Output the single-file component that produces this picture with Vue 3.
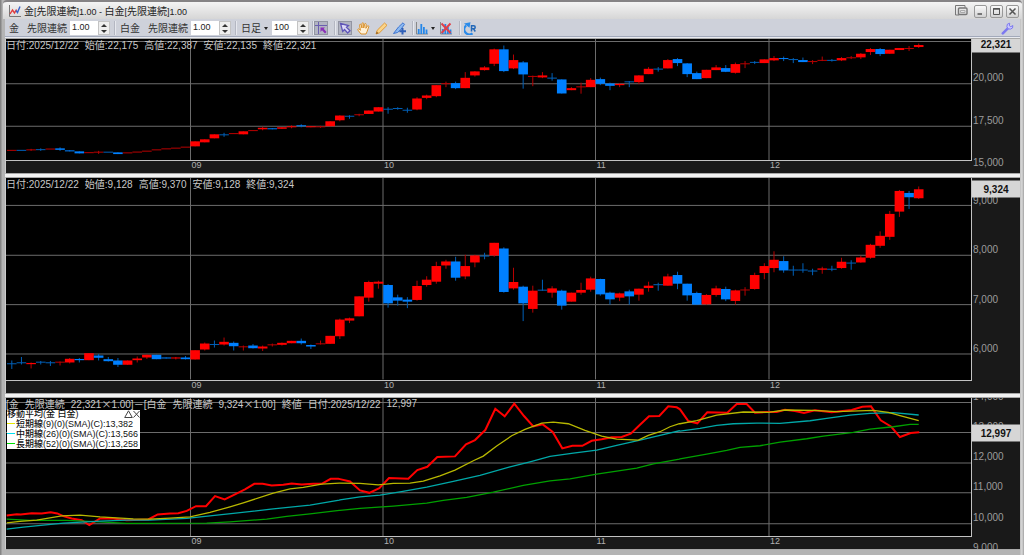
<script setup>
import { h, ref } from 'vue'

// Splits a label into Japanese and Latin runs so each gets its own face and size.
const Mix = (props) =>
  h(
    'span',
    { class: 'mix' },
    (props.t.match(/[\u3000-\u9fff\uff00-\uffef×]+|[^\u3000-\u9fff\uff00-\uffef×]+/g) || []).map((run) =>
      h('span', { class: /[\u3000-\u9fff\uff00-\uffef×]/.test(run) ? 'jp' : 'en' }, run)
    )
  )
Mix.props = ['t']

const qtyGold = ref('1.00')
const qtyPlatinum = ref('1.00')
const barCount = ref('100')
const period = ref('日足')

const STEP = 9.648
const center = (i) => 11.8 + STEP * i
const months = [
  { label: '09', x: 190.5 },
  { label: '10', x: 383 },
  { label: '11', x: 595.5 },
  { label: '12', x: 769 }
]

// colour, body top, body bottom, wick top, wick bottom
const parse = (src) =>
  src.trim().split(/\s*;\s*/).filter(Boolean).map((row, i) => {
    const [c, ...n] = row.trim().split(/\s+/)
    const [t, b = t, wt = t, wb = b] = n.map(Number)
    const thin = b - t < 1
    return {
      up: c === 'r',
      thin,
      x: center(i),
      top: thin ? (t + b) / 2 - 0.5 : t,
      height: thin ? 1 : b - t,
      w1: Math.min(wt, t),
      w2: Math.max(wb, b)
    }
  })

const gold = parse(`
r 150; b 150; r 149.5 149.5 148.5 150.5; b 149.3 149.3 148 150.5; r 148.7; b 148 149.5 147 150.5; b 150 151;
b 151 153; r 152.3; r 151.8 151.8 150.5 153.5; b 151.8; b 152 153.7; r 152.5; r 151.7; r 150.8; r 149.5;
r 148.5; r 147.8; r 146.8; r 141 146; r 139 142; r 134 138; b 134.5 134.5 132.5 136.5; r 133.3; r 131 134;
r 130.3; r 127.5 129 126.5 130; b 128 129; r 127 128.5; r 126 127 125 128; b 125 126 124 127; r 126 127;
r 126.5 126.5 125.5 127.5; r 121 126; r 115.3 120 115 121; b 116 116 115 118.5; r 114.5 114.5 113.5 116;
r 110.3 113.7; r 107 111.3; b 109 109 107 113.5; b 108.3 108.3 107 109.5; b 110 110 107.5 112.5;
r 98.3 109.3 97 110; r 95.3 97.7 94.5 99; r 85 96 85 97; r 83.5 83.5 81.5 87; b 83 88 81.5 89;
r 77.7 88 72 88; r 71.3 75.3 71 76.5; r 67.3 70 66 70.5; r 49.3 63.7 48.5 66; b 49.3 71 45.5 72;
r 60 68.3 54.5 69; b 62.3 74.3 61 88.5; r 76.3 76.3 75.5 86; r 75.3 77.3 72 78; b 78 78 73 80.5;
b 79.3 93.3; r 88 90 87 90; r 86.7 86.7 82.5 93.5; r 79.7 87 78 87; b 79 83.7 77.5 85; b 83.3 85.7 82.5 90;
r 83.7 85 83 87; b 81.7 81.7 81 87; r 75.3 82 75 84; r 68.7 74 67 74; b 69 69 67 71.5; r 60 68.3 59 68.3;
b 59 63 58 66; b 63.3 74 63 77; b 73 79 71.5 79; r 69.7 78; r 67.3 70 65 70; b 68 71.7 65 72;
r 64 72.7 62.5 73.5; r 63.7 63.7 61 68; b 62.3 62.3 61 64; r 59.3 63; r 58 60.3 56 61; b 58 59 56.5 61;
b 59.5 59.5 58 63; b 60 62 57.5 62; r 61.5 61.5 60 64; r 60.3 60.3 56.5 61; b 60.3 60.3 59 61.5;
r 58 60.3 57 61; r 57.7 57.7 56 59; r 53.7 57.3 53 59; r 49 52 48 55; b 49 54 48 56; r 49.7 53.7;
r 48 50; r 48.5 48.5 46 51; r 45 47 43.5 48`)

const platinum = parse(`
b 364.3 364.3 361 369.5; b 363.3 363.3 357.5 365; r 363.5 364.7 363 369; b 362.7 362.7 361.5 365;
b 363.3 363.3 361.5 366.5; r 362.7 362.7 362 366; r 359.3 363 358.5 364; b 359.5 360.7 358.5 363;
r 353.7 360.7; b 356 358.3 354.5 361; b 359.7 361.7 357.5 362; b 361 365.3 358.5 367.5; r 361 365.3;
r 359 360.7 357 363; r 355.3 358 355 359.5; b 355.3 359.7; b 358 359; r 358 359 357.5 360; b 358 359.7 356.5 360;
r 350.7 360; r 344 350 343 351; b 345 345 341 348; r 342.3 345 338 346; b 343.3 346.7 342 351;
r 347.3 347.3 346 351; b 346 348.7 344.5 349; r 347 349 346 351.5; r 345.3 345.3 344 347; r 343.3 345.3 343 346;
r 341.3 343.7; b 341.3 343.7 339 345; b 345.5 347 345 349.5; r 344.3 344.3 341 345; r 336.3 344.3;
r 320 336.7 319 339.5; r 318.7 321 318 323.5; r 296.7 316.7; r 282.3 298 281 302; r 282 284 281 289;
b 285.3 303.7 284.5 308; b 297.7 301 295 306; b 300 302 297.5 308.5; r 286.3 300.3 281 301;
r 280 285.3 276.5 287; r 266.3 282 262 284; r 261.7 265.7 260 269; b 261.7 278 257 281; r 266.3 276.7 255 279.5;
r 255.7 262.7 255 267.5; b 256.3 256.3 253 259.5; r 243 255.7 243 257; b 248.7 292.3 247.5 293;
r 282.3 288.7 268 290; b 287 303.7 286 321.5; r 291 309.3 286 313; b 290.5 290.5 280 291; r 288.7 293 286.5 298;
b 291 306 290 310; r 293 302; r 290.3 293 283 295; r 278.7 290 277 292; b 279.3 294.7 279 296; b 293 299.7 292 305;
r 293.7 298 293 301.5; b 291.7 296.7 290 305; r 289 295 289 301; r 286 288.3 282 292; b 285 285 283 291;
r 276.7 286 274 286; b 275.3 284 272 289.5; b 284 295.7 284 301; b 293.3 305 292 305; r 295.3 304.7 294.5 305;
r 288.7 295.3 286 297; b 289.3 299.7 287 301.5; r 290.7 301.3 290 305; r 290.3 290.3 287.5 296; r 275.3 289.3 273 290;
r 266.3 273.3 263.5 279.5; r 260 268.3 251.5 272.5; b 261.3 270.7 256.5 273; b 270.3 270.3 266 276;
b 270.3 270.3 263.5 273; b 271.3 271.3 269 275.5; r 268.7 270 267 274; b 269.5 269.5 266 271.5; r 262 268.3 258 269;
b 263.3 263.3 260.5 270; r 257.7 262.7 256 263; r 245 258 244 259; r 236 246 231.5 248; r 214 237 211 240;
r 191 211.7 190 217; b 193 197.3 191 209; r 189.3 198.3 186.5 199`)

// Curves are kept on a grid of thirds, in three consecutive blocks with their own origin.
const ORIGINS = [[0, 900], [1020, 1170], [2040, 1140]]
const trace = (...blocks) =>
  blocks
    .map((block, k) =>
      block.split(' ').map((pair) => {
        const [x, y] = pair.split(',').map(Number)
        return `${((x + ORIGINS[k][0]) / 3).toFixed(1)},${((y + ORIGINS[k][1]) / 3).toFixed(1)}`
      }).join(' ')
    )
    .join(' ')

const curves = [
  {
    name: 'spread',
    points: trace(
      '20,646 50,642 62,643 95,639 125,640 152,636 172,640 190,648 215,655 245,660 268,675 300,655 340,655 380,660 445,658 473,643 510,640 535,639 560,632 588,618 618,618 645,588 674,598 705,583 735,568 763,551 788,551 815,556 850,554 875,550 905,553 940,551 965,551 992,536 1015,536',
      '0,267 30,274 60,301 88,308 118,294 147,264 205,266 232,240 262,230 292,201 345,199 378,163 405,150 436,120 466,56 494,79 523,41 552,78 580,109 608,103 638,126 667,175 697,167 727,167 755,152 785,148 815,142 845,141 872,131 900,104 927,79 958,78 985,49 1010,52',
      '0,88 25,123 52,130 82,97 142,98 170,72 200,72 225,98 260,96 290,96 315,89 345,93 372,99 405,91 455,97 515,90 547,80 573,79 602,121 634,140 660,171 692,159 718,157'
    )
  },
  {
    name: 'long',
    points: trace(
      '20,657 90,661 200,661 300,665 380,670 620,669 690,665 800,657 860,649 930,641 1018,631',
      '0,361 60,355 160,348 260,339 310,331 380,322 460,306 550,286 630,272 690,266 770,252 890,234 940,221 1018,207',
      '0,236 80,222 140,211 180,202 240,197 300,186 380,176 430,168 520,157 570,147 640,140 690,133 716,133'
    )
  },
  {
    name: 'middle',
    points: trace(
      '20,687 70,681 130,675 190,669 300,663 380,660 450,660 560,655 700,640 820,626 930,615 1018,600',
      '0,329 60,320 120,315 180,305 260,291 340,274 420,256 510,230 570,215 630,199 700,189 770,180 830,166 900,150 960,136 1018,122',
      '0,153 60,145 110,136 160,131 230,129 300,130 390,122 440,115 510,105 570,100 640,98 716,105'
    )
  },
  {
    name: 'short',
    points: trace(
      '20,668 60,664 110,660 185,647 240,645 300,650 400,656 450,657 510,654 570,650 630,637 690,620 730,608 820,579 870,566 910,562 965,552 1018,549',
      '0,279 60,280 115,284 160,280 210,279 250,273 300,257 345,240 400,212 430,198 470,168 515,137 555,118 605,99 640,96 685,101 735,121 785,138 830,147 895,150 925,136 960,125 990,110 1018,101',
      '0,131 50,122 110,105 190,96 265,97 315,90 400,91 470,95 580,91 625,97 660,107 716,122'
    )
  }
]

const panels = [
  {
    id: 'gold', y: 39, h: 121, weight: 136, candles: gold, lines: [41.5, 83.5, 126],
    info: ['日付:2025/12/22', '始値:22,175', '高値:22,387', '安値:22,135', '終値:22,321'],
    prices: [['20,000', 78], ['17,500', 121], ['15,000', 163]], now: ['22,321', 44]
  },
  {
    id: 'platinum', y: 178, h: 202, weight: 217, candles: platinum, lines: [205.5, 255.5, 305, 354.5],
    info: ['日付:2025/12/22', '始値:9,128', '高値:9,370', '安値:9,128', '終値:9,324'],
    prices: [['9,000', 201], ['8,000', 250], ['7,000', 300], ['6,000', 349]], now: ['9,324', 189]
  },
  {
    id: 'diff', y: 398, h: 138, weight: 153, curves, lines: [402.5, 432.5, 463, 492.5, 523.5],
    info: ['[金', '先限連続', '22,321×1.00]－[白金', '先限連続', '9,324×1.00]', '終値', '日付:2025/12/22', '12,997'],
    prices: [['14,000', 397], ['13,000', 427], ['12,000', 457], ['11,000', 487], ['10,000', 518], ['9,000', 548]],
    now: ['12,997', 433]
  }
]

const legend = [
  { cls: 'short', text: '短期線(9)(0)(SMA)(C):13,382' },
  { cls: 'middle', text: '中期線(26)(0)(SMA)(C):13,566' },
  { cls: 'long', text: '長期線(52)(0)(SMA)(C):13,258' }
]
const share = (y, p) => `${((y - p.y) / (p.h + 13)) * 100}%`
</script>

<template>
  <main class="window">
    <header class="titlebar">
      <svg class="app-icon" width="13" height="13" viewBox="0 0 13 13">
        <path d="M1.5 0v11.5H13" fill="none" stroke="#777" />
        <path d="M2 9l2.5-4 2 3 2-3.500" fill="none" stroke="#e23a3a" stroke-width="1.400" />
        <path d="M8 5.500l1.500 2L12 1.500" fill="none" stroke="#3a62c8" stroke-width="1.400" />
      </svg>
      <h1><Mix t="金[先限連続]1.00 - 白金[先限連続]1.00" /></h1>
      <button class="plain" aria-label="別ウィンドウ">
        <svg width="13" height="12" viewBox="0 0 13 12" fill="none" stroke="#777">
          <path d="M10 2.500V.500H.500v9.500H4" />
          <rect x="3.500" y="3" width="8.500" height="6.500" rx="1" stroke-width="1.400" />
          <path d="M5.500 5.500h4.500v2H5.500z" stroke="#aaa" />
        </svg>
      </button>
      <button class="win" aria-label="最小化"><svg width="9" height="9" viewBox="0 0 9 9"><path d="M1.500 7h4.500" stroke="#555" stroke-width="1.500" /></svg></button>
      <button class="win" aria-label="最大化"><svg width="9" height="9" viewBox="0 0 9 9" fill="none" stroke="#555"><path d="M1.500 1.500h6v6h-6z" /><path d="M1 2h7" stroke-width="1.500" /></svg></button>
      <button class="win" aria-label="閉じる"><svg width="9" height="9" viewBox="0 0 9 9"><path d="M1.500 1.500l6 6M7.500 1.500l-6 6" stroke="#555" stroke-width="1.500" /></svg></button>
    </header>

    <nav class="toolbar">
      <div class="group wide">
        <span class="name">金</span>
        <label for="q1">先限連続</label>
        <span class="spin">
          <input id="q1" v-model="qtyGold" type="text" />
          <span class="steps"><button aria-label="増やす"></button><button aria-label="減らす"></button></span>
        </span>
      </div>
      <div class="group wide">
        <span class="name">白金</span>
        <label for="q2">先限連続</label>
        <span class="spin">
          <input id="q2" v-model="qtyPlatinum" type="text" />
          <span class="steps"><button aria-label="増やす"></button><button aria-label="減らす"></button></span>
        </span>
      </div>
      <div class="group period">
        <span class="select">
          <select v-model="period" aria-label="足種"><option>日足</option><option>週足</option><option>月足</option></select>
        </span>
        <span class="spin small">
          <input v-model="barCount" type="text" aria-label="本数" />
          <span class="steps"><button aria-label="増やす"></button><button aria-label="減らす"></button></span>
        </span>
      </div>
      <div class="group">
        <button class="tool on" aria-label="十字カーソル">
          <svg width="12" height="12" viewBox="0 0 12 12"><path d="M3.500 0v12M0 3.500h12" stroke="#6a5fb0" /><path d="M5.500 5.500h4.500L8.700 6.800 11.500 10 10 11.500 7 8.300 5.500 10z" fill="#8a2fb8" /></svg>
        </button>
      </div>
      <div class="group tools">
        <button class="tool on" aria-label="選択">
          <svg width="12" height="12" viewBox="0 0 12 12"><path d="M1.500 1.500l8 2-2 1.800L11 8.700 8.700 11 5.500 7.500 3.700 9.500z" fill="#dcd9f6" stroke="#5f55b8" stroke-width="1.300" /></svg>
        </button>
        <button class="tool" aria-label="移動">
          <svg width="13" height="13" viewBox="0 0 13 13"><path d="M4 12L1 8.200c-.8-1 .5-1.800 1.300-.9L3.400 8.300 2.600 3.300c-.2-1.300 1.200-1.500 1.500-.3L5 6V1.700C5 .4 6.600.4 6.700 1.700V6l.9-3.700c.3-1.200 1.700-.9 1.600.3L8.900 6.300l1.400-2.200c.7-1 1.900-.3 1.400.8L10.200 9.300 9 12z" fill="#fff1d8" stroke="#d9902a" /></svg>
        </button>
        <button class="tool" aria-label="鉛筆">
          <svg width="13" height="13" viewBox="0 0 13 13"><path d="M1 12l1.200-3.700L9.500 1l2.500 2.300-7.400 7.400z" fill="#fbd488" stroke="#e09a3a" /><path d="M1 12l.8-2.400 1.600 1.600z" fill="#8a5a20" /></svg>
        </button>
        <button class="tool" aria-label="ペン">
          <svg width="13" height="13" viewBox="0 0 13 13"><path d="M.500 11.500l5-6.500L10 .800l1.500 1.500L7.500 8l-3 2.500z" fill="#8bb9f2" stroke="#3f74d0" /><path d="M9.500 6v6.500M6.500 9.300h6.500" stroke="#2f5fb8" stroke-width="2" /></svg>
        </button>
      </div>
      <div class="group tools">
        <button class="tool menu" aria-label="チャート種別">
          <svg width="12" height="13" viewBox="0 0 12 13"><path d="M.500 0v12H12" stroke="#888" fill="none" /><path d="M2.700 12V7M5.300 12V2M7.900 12V5M10.500 12V7.500" stroke="#2687e8" stroke-width="1.800" /></svg>
          <i class="caret"></i>
        </button>
        <button class="tool" aria-label="指標削除">
          <svg width="12" height="13" viewBox="0 0 12 13"><path d="M.500 0v12H12" stroke="#888" fill="none" /><path d="M2.700 12V7M5.300 12V2M7.900 12V5M10.500 12V7.500" stroke="#2687e8" stroke-width="1.800" /><path d="M1.500 1.500l9 9.500M10.500 1.500l-9 9.500" stroke="#e0404a" stroke-width="1.900" /></svg>
        </button>
      </div>
      <div class="group last">
        <button class="tool" aria-label="再読込">
          <svg width="13" height="13" viewBox="0 0 13 13" fill="none"><path d="M8.500 11.300A4.800 4.800 0 0 1 2.200 3.500" stroke="#2a8bea" stroke-width="2.200" /><path d="M0 1.500L6.500.300 5.500 5.800z" fill="#2a8bea" /><path d="M7.500 9.500V3.800h2.200a1.500 1.500 0 0 1 0 3H7.500M9.500 6.800l1.800 2.700" stroke="#2368b8" stroke-width="1.500" /></svg>
        </button>
      </div>
      <button class="tool wrench" aria-label="設定">
        <svg width="13" height="13" viewBox="0 0 13 13"><path d="M1.800 11.300l5-5" stroke="#7d79f0" stroke-width="2.600" stroke-linecap="round" /><path d="M11.800 3.500A3 3 0 1 1 8.700 1.200L8.400 3.800l1.400.9z" fill="#c9c8ff" stroke="#7d79f0" /></svg>
      </button>
    </nav>

    <section class="charts">
      <article v-for="p in panels" :key="p.id" class="panel" :style="{ flexGrow: p.weight }">
        <div class="plot">
          <svg class="canvas" :viewBox="`6 ${p.y} 965 ${p.h}`" preserveAspectRatio="none">
            <g class="grid">
              <line v-for="y in p.lines" :key="y" x1="6" x2="971" :y1="y" :y2="y" />
              <line v-for="m in months" :key="m.label" :x1="m.x" :x2="m.x" :y1="p.y" :y2="p.y + p.h" />
            </g>
            <g v-for="(c, i) in p.candles" :key="i" :class="c.up ? 'up' : 'down'">
              <rect class="wick" :x="c.x - 0.5" :y="c.w1" width="1" :height="Math.max(c.w2 - c.w1, 0)" />
              <rect :class="{ wick: c.thin }" :x="c.x - 4.8" :y="c.top" width="9.6" :height="c.height" />
            </g>
            <polyline v-for="c in p.curves" :key="c.name" :class="['curve', c.name]" :points="c.points" />
          </svg>
          <div class="info"><Mix v-for="(t, i) in p.info" :key="i" :t="t" /></div>
          <div v-if="p.id === 'diff'" class="legend">
            <div class="legend-title"><Mix t="移動平均(金 白金)" />
              <span class="legend-tools">
                <button aria-label="折りたたむ"><svg width="9" height="8" viewBox="0 0 9 8"><path d="M4.500.800L.700 7.500h7.600z" fill="none" stroke="#444" /></svg></button>
                <button aria-label="閉じる"><svg width="7" height="8" viewBox="0 0 7 8"><path d="M.500 1l6 6.500M6.500 1l-6 6.500" stroke="#444" /></svg></button>
              </span>
            </div>
            <div v-for="l in legend" :key="l.cls" class="legend-row"><i :class="l.cls"></i><Mix :t="l.text" /></div>
          </div>
        </div>
        <div class="dates">
          <span v-for="m in months" :key="m.label" :style="{ left: `${((m.x - 5) / 966) * 100}%` }">{{ m.label }}</span>
        </div>
        <div class="prices">
          <span v-for="[t, y] in p.prices" :key="t" :style="{ top: share(y, p) }">{{ t }}</span>
          <strong :style="{ top: share(p.now[1], p) }">{{ p.now[0] }}</strong>
        </div>
      </article>
    </section>
  </main>
</template>

<style>
body { background: #b9b9b9; }
</style>

<style scoped>
* { box-sizing: border-box; }
.window {
  display: flex; flex-direction: column; min-height: 100vh;
  padding: 0 4px 5px 5px;
  background: linear-gradient(90deg, #858585 0, #858585 1px, #b4b4b4 2px, #b4b4b4 calc(100% - 4px), #d8d8d8 calc(100% - 3px), #c4c4c4 calc(100% - 1px), #999 100%);
  font: 10px/12px "Liberation Sans", "Noto Sans CJK JP", sans-serif; color: #333;
}
button { margin: 0; padding: 0; border: 0; background: none; display: flex; align-items: center; justify-content: center; }
svg { display: block; }
.mix { white-space: pre; }
:deep(.jp) { font-family: "Noto Sans CJK JP", sans-serif; font-size: 10px; }
:deep(.en) { font-family: "Liberation Sans", sans-serif; font-size: 10px; }

.titlebar {
  display: flex; align-items: center; gap: 3px; height: 19px;
  margin: 0 -2px; padding: 1px 3px 0 5px; border-top: 2px solid #858385;
  border-radius: 4px 4px 0 0;
  background: linear-gradient(#f4f4f4, #d6d6d6);
}
h1 { flex: 1; margin: 0; font-size: 10px; font-weight: 400; line-height: 14px; color: #222; }
h1 :deep(.en) { font-size: 9px; }
.win { width: 13px; height: 13px; border: 1px solid #999; border-radius: 2px; background: linear-gradient(#fafafa, #d2d2d2); }
.plain { margin-right: 3px; }

.toolbar {
  display: flex; align-items: center; height: 19px; padding: 0 6px 0 4px;
  background: #ced1da; border-bottom: 1px solid #e8eaf0; box-shadow: inset 0 -1px #a2a9ba;
  font-family: "Noto Sans CJK JP", sans-serif;
}
.group { display: flex; align-items: center; height: 14px; padding-right: 6px; margin-right: 3px; border-right: 1px solid #b4b7c2; box-shadow: 1px 0 #e6e8ee; }
.group.wide { padding-right: 4px; margin-right: 5px; }
.group.period { padding-right: 3px; margin-right: 1px; }
.group.last { border: 0; box-shadow: none; }
.name { margin-right: 8px; }
label { margin-right: 3px; }
.spin { display: flex; height: 14px; }
.spin input { width: 28px; height: 14px; border: 0; padding: 0 0 2px 2px; background: #fff; font: 9px/12px "Liberation Sans", sans-serif; color: #222; outline: 0; }
.spin.small input { width: 25px; }
.steps { display: flex; flex-direction: column; width: 12px; border: 1px solid #c4c4c4; background: #eee; }
.steps button { flex: 1; }
.steps button::before { content: ""; border: 3px solid transparent; border-top: 0; border-bottom: 3px solid #333; }
.steps button + button::before { border-bottom: 0; border-top: 3px solid #333; }
.select { position: relative; width: 29px; margin-right: 2px; }
.select::after { content: ""; position: absolute; right: 2px; top: 6px; border: 2px solid transparent; border-bottom: 0; border-top: 3px solid #222; }
select { appearance: none; width: 100%; border: 0; padding: 0; background: none; font: 10px/12px "Noto Sans CJK JP", sans-serif; color: #333; outline: 0; display: block; height: 14px; }
.tool { height: 14px; min-width: 14px; }
.tool.on { background: #b2b5c2; box-shadow: inset 0 0 0 1px #9295a2; }
.tools { gap: 4px; }
.menu { gap: 3px; }
.caret { border: 2px solid transparent; border-bottom: 0; border-top: 3px solid #222; }
.wrench { margin-left: auto; }

.charts { flex: 1; display: flex; flex-direction: column; gap: 3px; background: #f2f2f2; }
.panel {
  flex: 1 1 0; min-height: 0; display: grid; grid-template: minmax(0, 1fr) 12px / minmax(0, 1fr) 48px;
  border: 1px solid #a8a8a8; border-left-color: #ccc; border-right: 0; background: #191919;
}
.plot { position: relative; border-right: 1px solid #c2c2c2; border-bottom: 1px solid #c2c2c2; background: #000; }
.canvas { position: absolute; inset: 0; width: 100%; height: 100%; }
.grid line { stroke: #6c6c6c; stroke-width: 1; }
.up { fill: #f00; }
.down { fill: #0080ff; }
.up .wick { fill: #b80000; }
.down .wick { fill: #0060b8; }
.curve { fill: none; stroke-width: 1.3; }
.spread { stroke: #f00; stroke-width: 2; }
.short { stroke: #b8b800; }
.middle { stroke: #00a8a8; }
.long { stroke: #00a000; }

.info { position: relative; display: flex; height: 12px; gap: 6px; color: #c8c8c8; white-space: nowrap; }
.dates { position: relative; color: #b0b0b0; font: 9px/9px "Liberation Sans", sans-serif; }
.dates span { position: absolute; top: 0; }
.prices { position: relative; grid-area: 1 / 2 / 3 / 3; overflow: hidden; color: #9c9c9c; font: 10px/10px "Liberation Sans", sans-serif; }
.prices span { position: absolute; left: 1px; transform: translateY(-50%); }
.prices strong { position: absolute; left: 0; right: 0; height: 17px; line-height: 17px; transform: translateY(-50%); background: #d6d6d6; color: #111; text-align: center; }

.legend { position: absolute; left: 1px; top: 12px; width: 133px; height: 39px; background: #fff; color: #111; }
.legend-title, .legend-row { display: flex; align-items: center; height: 10px; line-height: 10px; font-weight: 500; }
.legend-title { height: 9px; line-height: 9px; }
.legend :deep(.jp), .legend :deep(.en) { font-size: 9px; }
.legend-tools { display: flex; margin-left: auto; }
.legend-row i { flex: none; width: 8px; height: 1px; margin-right: 1px; }
.legend-row .short { background: #e8e800; }
.legend-row .middle { background: #00e0f0; }
.legend-row .long { background: #00e000; }
</style>
